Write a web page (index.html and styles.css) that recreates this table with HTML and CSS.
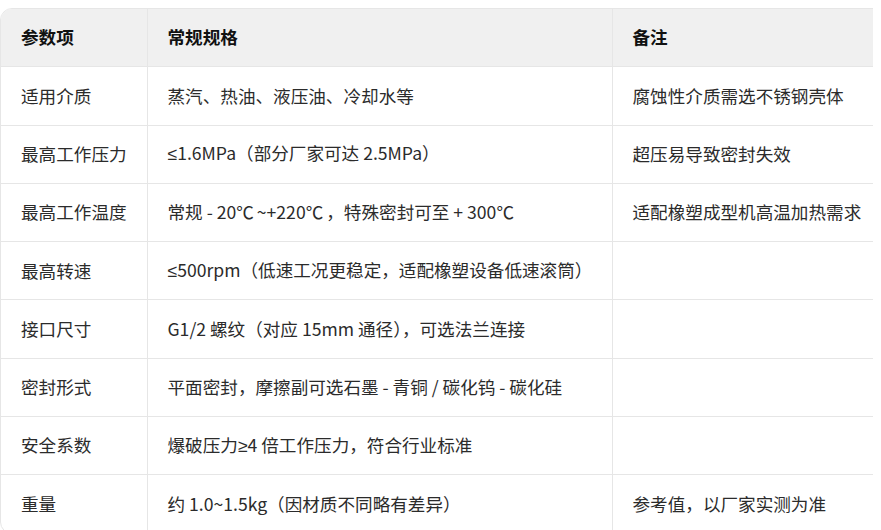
FILE: index.html
```html
<!DOCTYPE html>
<html lang="zh">
<head>
<meta charset="utf-8">
<link rel="stylesheet" href="styles.css">
</head>
<body>
<div class="scroll">
<div class="wrap">
<table class="spec">
<colgroup><col class="c1"><col class="c2"><col class="c3"></colgroup>
<thead>
<tr><th>参数项</th><th>常规规格</th><th>备注</th></tr>
</thead>
<tbody>
<tr><td>适用介质</td><td>蒸汽、热油、液压油、冷却水等</td><td>腐蚀性介质需选不锈钢壳体</td></tr>
<tr><td>最高工作压力</td><td><span class="op">≤</span>1.6MPa（部分厂家可达 2.5MPa）</td><td>超压易导致密封失效</td></tr>
<tr><td>最高工作温度</td><td>常规 - 20<span class="deg">℃</span>~+220<span class="deg">℃</span>，特殊密封可至 + 300<span class="deg">℃</span></td><td>适配橡塑成型机高温加热需求</td></tr>
<tr><td>最高转速</td><td><span class="op">≤</span>500rpm（低速工况更稳定，适配橡塑设备低速滚筒）</td><td></td></tr>
<tr><td>接口尺寸</td><td>G1/2 螺纹（对应 15mm 通径），可选法兰连接</td><td></td></tr>
<tr><td>密封形式</td><td>平面密封，摩擦副可选石墨 - 青铜 / 碳化钨 - 碳化硅</td><td></td></tr>
<tr><td>安全系数</td><td>爆破压力<span class="op">≥</span>4 倍工作压力，符合行业标准</td><td></td></tr>
<tr><td>重量</td><td>约 1.0~1.5kg（因材质不同略有差异）</td><td>参考值，以厂家实测为准</td></tr>
</tbody>
</table>
</div>
</div>
</body>
</html>
```
FILE: styles.css
```css
html, body {
  margin: 0;
  padding: 0;
  overflow: hidden;
  background: #fff;
}
body {
  padding-top: 8px;
  font-family: "Noto Sans CJK SC", "Noto Sans", sans-serif;
  font-size: 17.6px;
  color: #2b2b2b;
}
.scroll {
  width: 873px;
  overflow: hidden;
}
.wrap {
  width: 940px;
  border: 1px solid #e6e6e6;
  border-radius: 12px;
  overflow: hidden;
}
.spec {
  border-collapse: collapse;
  width: 100%;
  table-layout: fixed;
}
.c1 { width: 146px; }
.c2 { width: 465px; }
.c3 { width: auto; }
.spec th, .spec td {
  height: 57.3px;
  padding: 0 20px;
  text-align: left;
  vertical-align: middle;
  white-space: nowrap;
  border-bottom: 1px solid #e6e6e6;
  border-right: 1px solid #e6e6e6;
  line-height: 1.4;
}
.spec th {
  background: #f0f0f0;
  font-weight: 700;
  color: #111;
}
.spec tr:last-child td { border-bottom: none; }
.op {
  font-family: "Liberation Sans", sans-serif;
}
.deg {
  letter-spacing: 3px;
}
```
